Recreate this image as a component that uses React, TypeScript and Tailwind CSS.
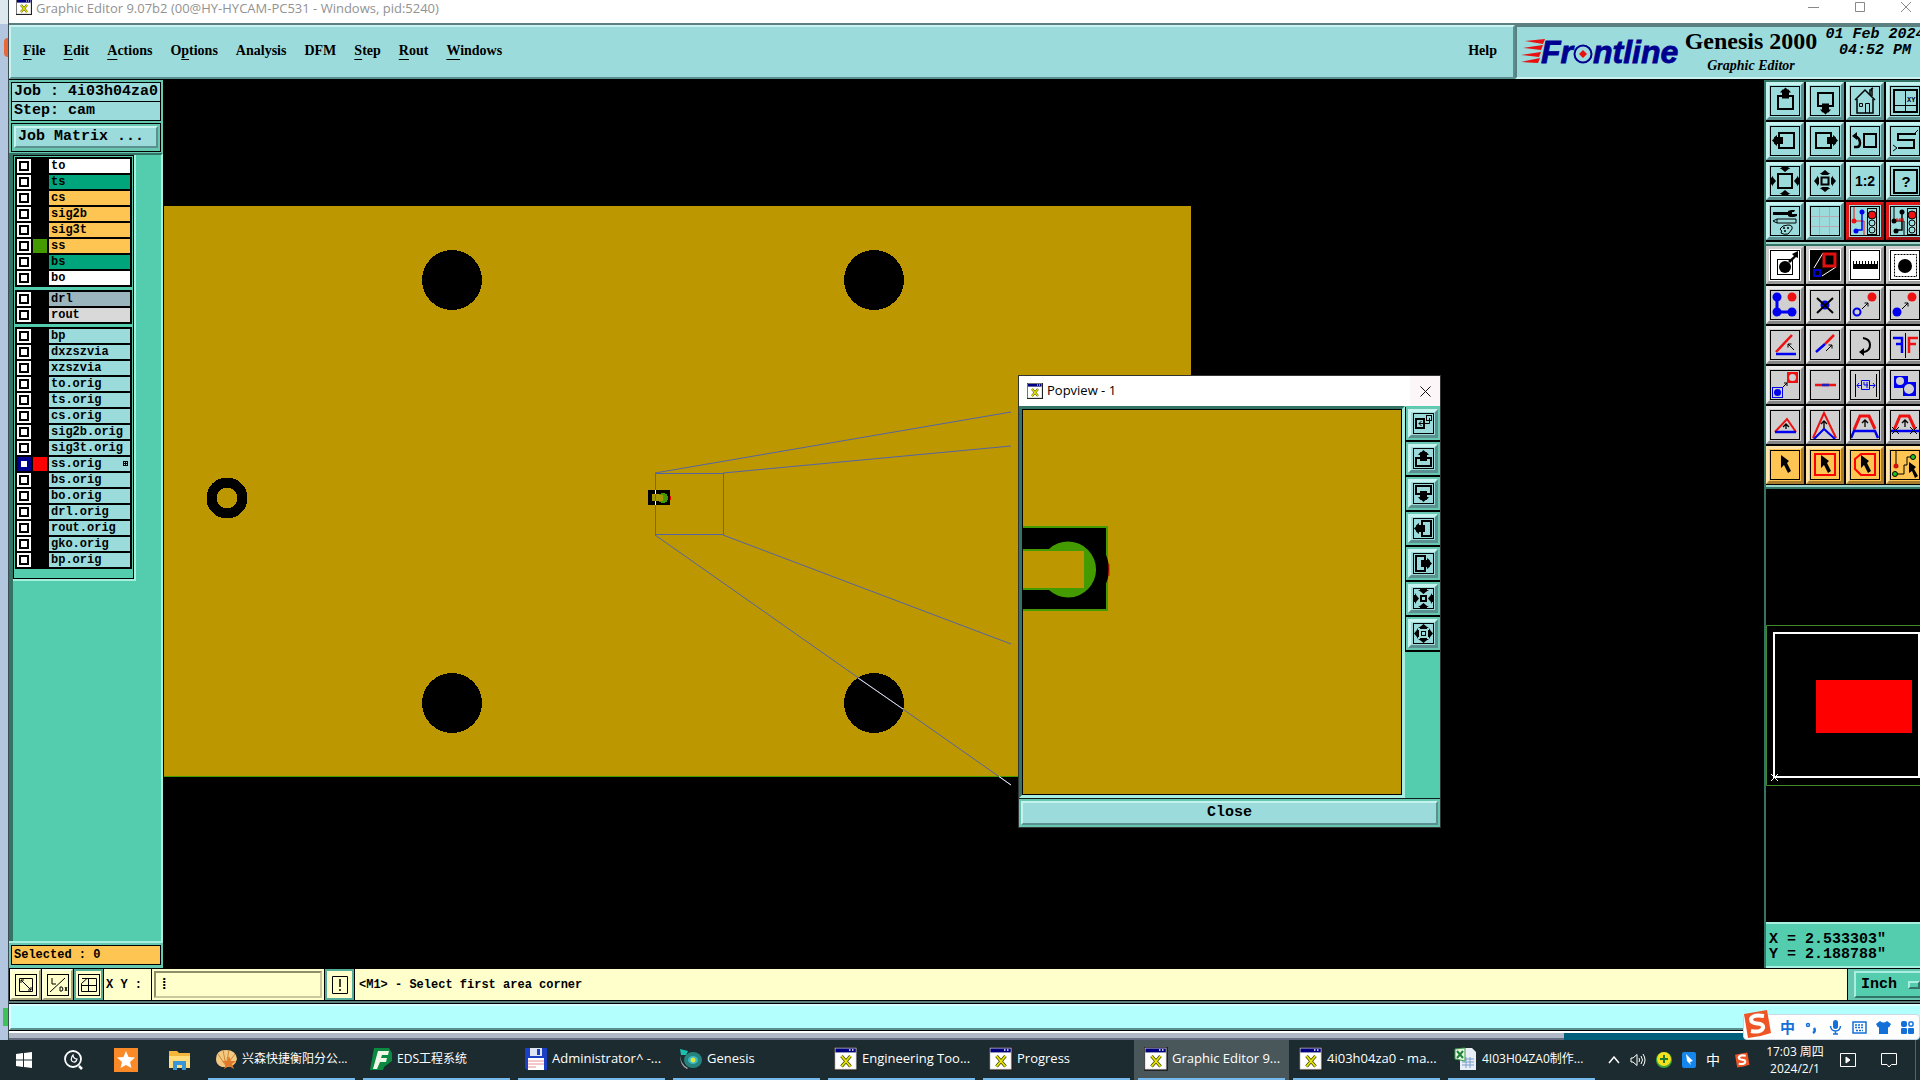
import React, { useState } from 'react';
import clsx from 'clsx';

type Layer = { name: string; color: string; swatch?: string; active?: boolean };

const MENU_ITEMS = [
  { label: 'File', key: 0 },
  { label: 'Edit', key: 0 },
  { label: 'Actions', key: 0 },
  { label: 'Options', key: 1 },
  { label: 'Analysis', key: -1 },
  { label: 'DFM', key: -1 },
  { label: 'Step', key: 0 },
  { label: 'Rout', key: 0 },
  { label: 'Windows', key: 0 },
];

const LAYER_GROUPS: Layer[][] = [
  [
    { name: 'to', color: 'bg-white' },
    { name: 'ts', color: 'bg-[#00a57c]' },
    { name: 'cs', color: 'bg-[#ffc553]' },
    { name: 'sig2b', color: 'bg-[#ffc553]' },
    { name: 'sig3t', color: 'bg-[#ffc553]' },
    { name: 'ss', color: 'bg-[#ffc553]', swatch: 'bg-[#449b00]' },
    { name: 'bs', color: 'bg-[#00a57c]' },
    { name: 'bo', color: 'bg-white' },
  ],
  [
    { name: 'drl', color: 'bg-[#9bb5bf]' },
    { name: 'rout', color: 'bg-[#d9d9d9]' },
  ],
  [
    { name: 'bp', color: 'bg-[#9bdbdb]' },
    { name: 'dxzszvia', color: 'bg-[#9bdbdb]' },
    { name: 'xzszvia', color: 'bg-[#9bdbdb]' },
    { name: 'to.orig', color: 'bg-[#9bdbdb]' },
    { name: 'ts.orig', color: 'bg-[#9bdbdb]' },
    { name: 'cs.orig', color: 'bg-[#9bdbdb]' },
    { name: 'sig2b.orig', color: 'bg-[#9bdbdb]' },
    { name: 'sig3t.orig', color: 'bg-[#9bdbdb]' },
    { name: 'ss.orig', color: 'bg-[#9bdbdb]', swatch: 'bg-[#ff0000]', active: true },
    { name: 'bs.orig', color: 'bg-[#9bdbdb]' },
    { name: 'bo.orig', color: 'bg-[#9bdbdb]' },
    { name: 'drl.orig', color: 'bg-[#9bdbdb]' },
    { name: 'rout.orig', color: 'bg-[#9bdbdb]' },
    { name: 'gko.orig', color: 'bg-[#9bdbdb]' },
    { name: 'bp.orig', color: 'bg-[#9bdbdb]' },
  ],
];

const MONO = "font-['Liberation_Mono','DejaVu_Sans_Mono',monospace] font-bold";
const SERIF = "font-['Liberation_Serif',serif] font-bold";
const UI = "font-['Open_Sans','Noto_Sans_CJK_SC',sans-serif]";

const CYAN_BEVEL = 'bg-[#9bdbdb] border-t-[#c4f3f0] border-l-[#c4f3f0] border-b-[#5c8f8f] border-r-[#5c8f8f]';
const GRAY_BEVEL = 'bg-[#d0d0d0] border-t-[#ececec] border-l-[#ececec] border-b-[#858585] border-r-[#858585]';
const WHITE_BEVEL = 'bg-white border-t-[#cfcfcf] border-l-[#cfcfcf] border-b-[#9a9a9a] border-r-[#9a9a9a]';
const ORANGE_BEVEL = 'bg-[#ffc553] border-t-[#ffe3a8] border-l-[#ffe3a8] border-b-[#a87c2c] border-r-[#a87c2c]';
const RED_BEVEL = 'bg-[#9bdbdb] border-t-[#e01818] border-l-[#e01818] border-b-[#9b1010] border-r-[#9b1010]';
const CREAM_BEVEL = 'bg-[#ffffcc] border-t-[#ffffe8] border-l-[#ffffe8] border-b-[#a3a37c] border-r-[#a3a37c]';

const BLUE = '#0000f0';
const RED = '#ee1111';

/* small arrow head with a stem, tip at 0,0 pointing up */
const Head = ({ x, y, r = 0 }: { x: number; y: number; r?: number }) => (
  <path d="M0 0l2 2h1l2.500 3h-2v6h-7v-6h-2l2.500-3h1z" transform={`translate(${x} ${y}) rotate(${r})`} />
);
const Tri = ({ x, y, r = 0 }: { x: number; y: number; r?: number }) => (
  <path d="M0 0l3 2.500l2.500 1.500h-2v1h-7v-1h-2l2.500-1.500z" transform={`translate(${x} ${y}) rotate(${r})`} />
);
const Box = ({ x, y, w, h = w, s = 2, c = '#000' }: { x: number; y: number; w: number; h?: number; s?: number; c?: string }) => (
  <rect x={x} y={y} width={w} height={h} fill="none" stroke={c} strokeWidth={s} />
);
const Go = ({ x, y, r = 0 }: { x: number; y: number; r?: number }) => (
  <path d="M0 0L6 -6M2.500 -6H6V-2.500" fill="none" stroke="#000" transform={`translate(${x} ${y}) rotate(${r})`} />
);
const Cursor = () => <path d="M11 5l8 6l-2 2l4 8l-3 2l-4-8l-3 3z" />;
const UpArrow = ({ x, y, h = 7 }: { x: number; y: number; h?: number }) => (
  <path d={`M${x} ${y + h}V${y}M${x - 3} ${y + 3}L${x} ${y}L${x + 3} ${y + 3}`} fill="none" stroke="#000" strokeWidth="1.300" />
);
const Signals = ({ lead }: { lead: string }) => (
  <>
    <path d="M4 1V16M4 15H14V29" fill="none" stroke={lead === 'red' ? RED : '#000'} />
    <path d="M12 5V24H7" fill="none" stroke={lead === 'red' ? BLUE : '#000'} strokeWidth="1.500" />
    {lead !== 'red' && <path d="M7 12V16M10 12V16M13 12V16M5 14H14" stroke={RED} />}
    <circle cx="4" cy="15" r="2.500" fill={lead === 'red' ? RED : '#000'} />
    <circle cx="12" cy="6" r="2.500" fill={lead === 'red' ? BLUE : '#000'} />
    <circle cx="6" cy="25" r="2.500" fill={lead === 'red' ? BLUE : '#000'} />
    <rect x="17.500" y="2.500" width="9" height="26" fill="#9bdbdb" stroke="#000" />
    <circle cx="22" cy="9" r="4" fill={RED} stroke="#000" />
    <circle cx="22" cy="17" r="3" fill="none" stroke="#000" />
    <circle cx="22" cy="24" r="3" fill="none" stroke="#000" />
  </>
);

const ICONS: Record<string, React.ReactNode> = {
  'Pan up': <><Box x={8} y={10} w={15} h={13} /><Head x={15.5} y={1.5} /></>,
  'Pan down': <><Box x={8} y={7} w={15} h={13} /><Head x={15.5} y={28.5} r={180} /></>,
  Home: (
    <>
      <path d="M5 14L15 4L25 14" fill="none" stroke="#000" strokeWidth="1.500" />
      <path d="M7 13V27H23V13M20 9V4H22V10M21 3L23 2" fill="none" stroke="#000" strokeWidth="1.500" />
      <path d="M9.500 17.500H12.500V20.500H9.500ZM15.500 27V17.500H19.500V27" fill="none" stroke="#000" />
    </>
  ),
  'Area XY': (
    <>
      <Box x={4} y={4} w={23} h={22} />
      <path d="M15.500 4V26M4 19.500H27" stroke="#000" />
      <text x="17" y="16" fontSize="7" fontWeight="bold" fontFamily="Liberation Mono">XY</text>
    </>
  ),
  'Pan left': <><Box x={9} y={7} w={15} /><Head x={2} y={14.5} r={-90} /></>,
  'Pan right': <><Box x={6} y={7} w={15} /><Head x={28} y={14.5} r={90} /></>,
  'Previous view': (
    <>
      <Box x={14} y={8} w={12} h={13} />
      <path d="M4 21H7Q10 21 10 17Q10 12 5 10" fill="none" stroke="#000" strokeWidth="2.500" />
      <path d="M2 10L7 6V14Z" />
    </>
  ),
  Serpentine: (
    <>
      <path d="M26 8H8V14H24V22H8" fill="none" stroke="#000" strokeWidth="2" />
      <path d="M25 7L28 4M7 22L3 19M7 22L3 25" stroke="#000" fill="none" />
    </>
  ),
  'Zoom in': (
    <>
      <Box x={8} y={8} w={14} />
      <Tri x={15} y={6} r={180} /><Tri x={15} y={24} /><Tri x={6} y={15} r={90} /><Tri x={24} y={15} r={-90} />
    </>
  ),
  'Zoom out': (
    <>
      <Box x={11.5} y={11.5} w={7} />
      <Tri x={15} y={4} /><Tri x={15} y={26} r={180} /><Tri x={4} y={15} r={-90} /><Tri x={26} y={15} r={90} />
    </>
  ),
  'Scale 1:2': <text x="15" y="20" textAnchor="middle" fontSize="14" fontWeight="bold" fontFamily="Liberation Sans">1:2</text>,
  Help: (
    <>
      <Box x={4} y={4} w={23} />
      <text x="16" y="21" textAnchor="middle" fontSize="15" fontWeight="bold" fontFamily="Liberation Sans">?</text>
    </>
  ),
  Options: (
    <>
      <path d="M3 6H18V9H3ZM18 5L21 4H25L24 6H22V8H27V10L24 11H20L18 10Z" />
      <path d="M3 15L7 13H26V17H7ZM7 13V17" fill="none" stroke="#000" />
      <path d="M10 23Q12 19 18 19Q23 19 22 23Q20 26 18 28Q14 29 11 27Q13 25 10 23Z" fill="none" stroke="#000" />
      <circle cx="15" cy="25" r="1" /><circle cx="18" cy="22" r="1" /><circle cx="14" cy="22" r="1" />
    </>
  ),
  Grid: <path d="M9.500 1V29M19.500 1V29M1 10.500H29M1 20.500H29" stroke="#b9a9b5" />,
  'Signals on': <Signals lead="red" />,
  'Signals off': <Signals lead="black" />,
  'Feature info': (
    <>
      <Box x={7.5} y={9.5} w={15} s={1} />
      <circle cx="15" cy="17" r="6" />
      <path d="M18 11L24 6L22 4L28 1V8L26 7L20 13Z" />
    </>
  ),
  Popview: (
    <>
      <rect width="30" height="30" />
      <path d="M4 18L13 3M12 26L26 17" stroke="#fff" fill="none" />
      <Box x={14} y={4} w={11} h={12} s={3} c="#e01010" /><Box x={4} y={20} w={6} c="#0000d0" />
    </>
  ),
  Measure: <path d="M3 19V11H4V14H6V11H7V14H9V11H10V14H12V11H13V14H15V11H16V14H18V11H19V14H21V11H22V14H24V11H25V14H27V11H28V19Z" />,
  Reference: (
    <>
      <rect x="4.500" y="4.500" width="22" height="22" fill="none" stroke="#000" strokeDasharray="2 1" />
      <circle cx="15" cy="16" r="7" />
    </>
  ),
  'Copy chain': (
    <>
      <path d="M7 7V22H22" fill="none" stroke={BLUE} strokeWidth="3" />
      <g fill={BLUE}><circle cx="7" cy="7" r="4.500" /><circle cx="7" cy="22" r="4.500" /><circle cx="22" cy="22" r="4.500" /></g>
      <circle cx="22" cy="7" r="4.500" fill={RED} />
    </>
  ),
  Delete: <><circle cx="15" cy="15" r="4.500" fill={BLUE} /><path d="M7 8L23 23M23 8L7 23" stroke="#000" strokeWidth="2" /></>,
  Move: <><circle cx="7" cy="22" r="3.500" fill="none" stroke={BLUE} strokeWidth="2" /><circle cx="22" cy="7" r="4.500" fill={RED} /><Go x={12} y={19} /></>,
  Copy: <><circle cx="7" cy="22" r="4.500" fill={BLUE} /><circle cx="22" cy="7" r="4.500" fill={RED} /><Go x={12} y={19} /></>,
  Rotate: (
    <>
      <path d="M6 22L22 5" stroke={RED} strokeWidth="2.500" /><path d="M6 24H26" stroke={BLUE} strokeWidth="2.500" />
      <Go x={24} y={20} r={-90} />
    </>
  ),
  Stretch: (
    <>
      <path d="M15 14L24 5" stroke={RED} strokeWidth="2.500" /><path d="M6 22L15 14" stroke={BLUE} strokeWidth="2.500" />
      <Go x={16} y={21} />
    </>
  ),
  Undo: <><path d="M13 8Q20 9 20 15Q20 21 14 22H11" fill="none" stroke="#000" strokeWidth="2" /><path d="M9 22L14 18V26Z" /></>,
  Mirror: (
    <>
      <path d="M3 8H12V23M12 14H6" fill="none" stroke={BLUE} strokeWidth="2.500" />
      <path d="M15.500 3V28" stroke="#000" />
      <path d="M28 8H19V23M19 14H26" fill="none" stroke={RED} strokeWidth="2.500" />
    </>
  ),
  Substitute: (
    <>
      <Box x={2.5} y={17.5} w={10} s={1} c={BLUE} /><circle cx="7.500" cy="22.500" r="3.500" fill={BLUE} />
      <rect x="17" y="2" width="11" height="11" fill={RED} /><circle cx="22.500" cy="7.500" r="3.500" fill="#d0d0d0" />
      <path d="M13 17L17 13M14 13H17V16" fill="none" stroke="#000" />
    </>
  ),
  Break: <><path d="M5 15H26" stroke={RED} strokeWidth="2.500" /><path d="M12 15H19" stroke="#2020c0" strokeWidth="2.500" /></>,
  Spacing: (
    <>
      <path d="M5.500 4V27M26.500 4V27" stroke="#000" />
      <g stroke={BLUE} fill="none"><path d="M11.500 10.500H19.500V19.500H11.500ZM14 12V15H18M17 12V18M7 15.500H11M20 15.500H25M9 13L7 15.500L9 18M23 13L25 15.500L23 18" /></g>
    </>
  ),
  Resize: (
    <>
      <path d="M4 6H18V12H26V26H13V18H4Z" fill={BLUE} />
      <circle cx="10" cy="11" r="4" fill="#d0d0d0" /><circle cx="19" cy="19" r="5" fill="#d0d0d0" />
    </>
  ),
  'Line slide': (
    <>
      <path d="M5 22L17 9L26 22" fill="none" stroke={RED} strokeWidth="2" /><path d="M5 22H26" stroke={BLUE} strokeWidth="2.500" />
      <UpArrow x={16} y={14} h={5} />
    </>
  ),
  'Corner slide': (
    <>
      <path d="M3 28L14 3L26 28" fill="none" stroke={RED} strokeWidth="2" /><path d="M4 29L14 19L25 29" fill="none" stroke={BLUE} strokeWidth="2" />
      <UpArrow x={14} y={11} />
    </>
  ),
  'Parallel slide': (
    <>
      <path d="M4 20L10 6H19L25 19" fill="none" stroke={RED} strokeWidth="3" /><path d="M1 28L4 21H25L28 28" fill="none" stroke={BLUE} strokeWidth="2.500" />
      <UpArrow x={15} y={10} />
    </>
  ),
  'Fixed slide': (
    <>
      <path d="M4 20L10 6H19L25 19" fill="none" stroke={RED} strokeWidth="3" /><path d="M1 21H29" stroke={BLUE} strokeWidth="2.500" />
      <path d="M2 17L9 24M9 17L2 24M20 17L27 24M27 17L20 24" stroke="#000" /><UpArrow x={15} y={10} />
    </>
  ),
  Select: <Cursor />,
  'Select frame': <><Box x={5} y={4} w={20} h={21} c="#ff0000" /><Cursor /></>,
  'Select polygon': <><path d="M11 4H25V25H11L5 19V9Z" fill="none" stroke="#ff0000" strokeWidth="2" /><Cursor /></>,
  'Select net': (
    <>
      <path d="M6 1V16M6 24H14V15H17V7H24" fill="none" stroke="#000" />
      <circle cx="6" cy="16" r="2.500" fill="#d01010" /><circle cx="5" cy="24" r="2.500" fill="#20c020" stroke="#000" /><circle cx="23" cy="7" r="2.500" fill="#20c020" stroke="#000" />
      <path d="M19 12l7 5l-2 2l4 7l-3 2l-3-7l-3 2z" />
    </>
  ),
};

/* the popview buttons use their own 21px drawings */
const SMALL_ICONS: Record<string, React.ReactNode> = {
  'Place popview': (
    <>
      <Box x={3} y={6} w={8} h={9} />
      <Box x={13.5} y={2.5} w={5} s={1} />
      <path d="M16.500 5V10.500H6M8.500 8L6 10.500L8.500 13" fill="none" stroke="#000" />
    </>
  ),
  'Popview up': <><Box x={3} y={10} w={15} h={8} /><Head x={10.5} y={2} /></>,
  'Popview down': <><Box x={3} y={3} w={15} h={8} /><Head x={10.5} y={19} r={180} /></>,
  'Popview left': <><Box x={9} y={3} w={9} h={15} /><Head x={1} y={10.5} r={-90} /></>,
  'Popview right': <><Box x={3} y={3} w={9} h={15} /><Head x={19} y={10.5} r={90} /></>,
  'Popview zoom in': (
    <>
      <Box x={8} y={8} w={5} />
      <Tri x={10.5} y={6} r={180} /><Tri x={10.5} y={15} /><Tri x={6} y={10.5} r={90} /><Tri x={15} y={10.5} r={-90} />
    </>
  ),
  'Popview zoom out': (
    <>
      <Box x={8.5} y={8.5} w={4} s={1} />
      <Tri x={10.5} y={1} /><Tri x={10.5} y={20} r={180} /><Tri x={1} y={10.5} r={-90} /><Tri x={20} y={10.5} r={90} />
    </>
  ),
};

const VIEW_TOOLS = [
  'Pan up', 'Pan down', 'Home', 'Area XY',
  'Pan left', 'Pan right', 'Previous view', 'Serpentine',
  'Zoom in', 'Zoom out', 'Scale 1:2', 'Help',
  'Options', 'Grid', 'Signals on', 'Signals off',
];

const EDIT_TOOLS = [
  'Feature info', 'Popview', 'Measure', 'Reference',
  'Copy chain', 'Delete', 'Move', 'Copy',
  'Rotate', 'Stretch', 'Undo', 'Mirror',
  'Substitute', 'Break', 'Spacing', 'Resize',
  'Line slide', 'Corner slide', 'Parallel slide', 'Fixed slide',
  'Select', 'Select frame', 'Select polygon', 'Select net',
];

const XIcon = ({ className }: { className?: string }) => (
  <svg viewBox="0 0 16 16" className={className} aria-hidden="true">
    <rect width="16" height="16" fill="#222" />
    <rect x="0.500" y="0.500" width="14.500" height="14.500" fill="#c8c8c8" />
    <rect x="1" y="1" width="13.500" height="2.500" fill="#000080" />
    <path d="M10 2h1M12 2h1" stroke="#fff" />
    <rect x="1" y="4" width="13.500" height="10.500" fill="#fff" />
    <path d="M5 6L11 13M11 6L5 13" stroke="#444400" strokeWidth="2.200" />
    <path d="M5 6L11 13M11 6L5 13" stroke="#e8e800" strokeWidth="1.200" />
  </svg>
);

const ToolButton = ({ name, bevel }: { name: string; bevel: string }) => (
  <button aria-label={name} className={clsx('size-[38px] border-3 p-px', bevel)}>
    <svg viewBox="0 0 30 30" className="size-[30px]">
      {ICONS[name]}
      {name !== 'Popview' && <Box x={0.5} y={0.5} w={29} s={1} />}
    </svg>
  </button>
);

const editBevel = (i: number) => {
  if (i < 4) return WHITE_BEVEL;
  return i >= 20 ? ORANGE_BEVEL : GRAY_BEVEL;
};

const TitleBar = () => (
  <header className="flex h-[23px] items-start bg-white pl-[7px]">
    <XIcon className="-mt-px size-4" />
    <h1 className={`${UI} flex-1 pl-1 text-[13px] leading-4 text-[#929292]`}>
      Graphic Editor 9.07b2 (00@HY-HYCAM-PC531 - Windows, pid:5240)
    </h1>
    <div className="flex gap-8 pr-1.5">
      {['M0 7.500H11', 'M1.500 2.500H10.500V11.500H1.500Z', 'M1 2L11 12M11 2L1 12'].map((d, i) => (
        <button key={d} aria-label={['Minimize', 'Maximize', 'Close'][i]} className="w-3.5">
          <svg viewBox="0 0 12 13" className="h-[13px] w-3" fill="none" stroke="#888"><path d={d} /></svg>
        </button>
      ))}
    </div>
  </header>
);

const Logo = () => (
  <svg viewBox="0 -5 162 40" className="h-10 w-[162px] shrink-0" role="img" aria-label="Frontline">
    <g fill="#e81010">
      <path d="M4 4L24 2L22 7Z" /><path d="M2 11L22 8L20 13Z" /><path d="M0 18L20 15L18 20Z" /><path d="M0 25L19 21L17 26Z" />
    </g>
    <g fill="#000090" stroke="#000090" strokeWidth="0.800" fontFamily="Liberation Sans" fontWeight="bold" fontStyle="italic" fontSize="32">
      <text x="20" y="26">Fr</text>
      <text x="72" y="26">ntline</text>
    </g>
    <circle cx="62" cy="17" r="8.500" fill="#9bdbdb" stroke="#000090" strokeWidth="2" />
    <path d="M62 13L66 17L62 21L58 17Z" fill="#e81010" />
  </svg>
);

const MenuBar = () => (
  <div className="flex h-14 border-t-2 border-[#5c8080] bg-[#9bdbdb]">
    <nav className={`${SERIF} flex min-w-0 flex-1 items-center gap-[18px] border-2 border-[#c9f3f1] border-r-[#5c8f8f] border-b-[#5c8f8f] pr-4 pb-0.5 pl-3 text-sm`}>
      {MENU_ITEMS.map(({ label, key }) => (
        <button key={label}>
          {key < 0 ? label : (
            <>{label.slice(0, key)}<span className="underline underline-offset-4">{label[key]}</span>{label.slice(key + 1)}</>
          )}
        </button>
      ))}
      <button className="ml-auto">Help</button>
    </nav>
    <div className="flex w-[405px] shrink-0 items-center overflow-hidden border-2 border-r-0 border-[#5c8080] border-b-[#c9f3f1] pl-1">
      <Logo />
      <div className={`${SERIF} w-[136px] shrink-0 text-center`}>
        <div className="text-2xl leading-7 whitespace-nowrap">Genesis 2000</div>
        <div className="text-sm leading-[22px] italic">Graphic Editor</div>
      </div>
      <div className={`${MONO} w-[108px] shrink-0 self-start pl-1 text-center text-[15px] leading-4 whitespace-nowrap italic`}>
        <div>01 Feb 2024</div>
        <div>04:52 PM</div>
      </div>
    </div>
  </div>
);

const LayerList = () => (
  <div className="flex flex-1 border-t-2 border-r-2 border-b-2 border-t-[#347466] border-r-[#a9efe0] border-b-[#a9efe0] bg-[#54cdae]">
    <div className="w-1 bg-[#347466]" />
    <div className="self-start border-r-2 border-b-2 border-[#a9efe0]">
      <div className="flex h-[424px] w-[121px] flex-col gap-[3px] border border-black p-px">
        {LAYER_GROUPS.map((group, g) => (
          <ul key={g} className="flex w-[117px] flex-col gap-0.5 bg-black p-0.5">
            {group.map((layer) => (
              <li key={layer.name}>
                <label className="flex h-3.5 gap-0.5">
                  <input
                    type="checkbox"
                    defaultChecked={layer.active}
                    className="size-3.5 appearance-none border-2 border-white bg-white shadow-[inset_0_0_0_2px_#000] checked:border-[#000090] checked:shadow-[inset_0_0_0_2px_#000090]"
                  />
                  <span className={clsx('size-3.5', layer.swatch)} />
                  <span className={clsx(MONO, 'flex flex-1 items-center justify-between px-0.5 text-xs leading-3', layer.color)}>
                    {layer.name}
                    {layer.active && (
                      <svg viewBox="0 0 5 5" className="size-[5px]"><path d="M0 0H5V5H0ZM1 1V2H2V1ZM3 1V2H4V1ZM1 3V4H2V3ZM3 3V4H4V3Z" fillRule="evenodd" /></svg>
                    )}
                  </span>
                </label>
              </li>
            ))}
          </ul>
        ))}
      </div>
    </div>
  </div>
);

const Sidebar = () => (
  <aside className="flex w-[154px] shrink-0 flex-col bg-[#66c8b0]">
    <div className={`${MONO} px-0.5 pt-0.5 text-[15px] whitespace-nowrap`}>
      <div className="h-5 border border-black bg-[#9bdbdb] pl-0.5 leading-[18px]">Job : 4i03h04za0</div>
      <div className="h-[19px] border border-t-0 border-black bg-[#9bdbdb] pl-0.5 leading-[18px]">Step: cam</div>
      <div className="mt-0.5 border border-black p-0.5">
        <button className={clsx('h-[22px] w-full border-2 pl-0.5 text-left leading-4', CYAN_BEVEL)}>Job Matrix ...</button>
      </div>
    </div>
    <div className="mt-px flex flex-1"><LayerList /></div>
    <div className="px-0.5 pt-0.5 pb-[3px]">
      <div className={`${MONO} h-5 border border-black bg-[#ffc553] px-0.5 text-xs leading-[18px]`}>Selected : 0</div>
    </div>
  </aside>
);

/* board drawing, one unit per screen pixel */
const Board = () => (
  <svg className="block h-[888px] w-[1601px]" viewBox="0 0 1601 888" shapeRendering="crispEdges">
    <rect x="1" y="126" width="1027" height="570" fill="#bd9700" />
    <path d="M1 696.500H1028" stroke="#449b00" />
    {[[289, 200], [711, 200], [289, 623], [711, 623]].map(([cx, cy]) => (
      <circle key={`${cx}-${cy}`} cx={cx} cy={cy} r="30" />
    ))}
    <circle cx="64" cy="418" r="15.500" fill="none" stroke="#000" strokeWidth="10" />
    <rect x="485" y="410" width="22" height="15" />
    <rect x="489" y="414" width="10" height="7" fill="#bd9700" />
    <circle cx="500" cy="418" r="5" fill="#449b00" />
    <rect x="489" y="415" width="11" height="6" fill="#a49700" />
    <path d="M507 416V420" stroke="#f00" />
    <g fill="none" stroke="#5564a4">
      <rect x="492.500" y="393.500" width="68" height="61" />
      <path d="M492 393L848 332M560 393L848 366M492 455L848 705M560 455L848 564" shapeRendering="auto" />
    </g>
    <path d="M492.500 410V414M492.500 421V425" stroke="#fff" />
    <path d="M695 598L740 629" stroke="#ddd" shapeRendering="auto" />
    <path d="M836 696.500L848 705" stroke="#eee" shapeRendering="auto" />
  </svg>
);

const PopviewWindow = ({ onClose }: { onClose: () => void }) => (
  <section className="absolute top-[295px] left-[855px] w-[423px] border border-[#333] bg-[#101c18]">
    <div className="flex h-[30px] items-center bg-white pl-2">
      <XIcon className="size-4" />
      <h2 className={`${UI} flex-1 pb-px pl-1 text-[13px]`}>Popview - 1</h2>
      <button aria-label="Close popview" onClick={onClose} className="flex h-full w-[30px] items-center justify-center bg-[#fdf6f8]">
        <svg viewBox="0 0 11 11" className="size-[11px]" stroke="#111"><path d="M0.500 0.500L10.500 10.500M10.500 0.500L0.500 10.500" /></svg>
      </button>
    </div>
    <div className="flex">
      <div className="flex-1 border-3 border-t-[#347466] border-r-[#a9efe0] border-b-[#a9efe0] border-l-[#347466]">
        <svg viewBox="0 0 378 384" className="h-[386px] w-full border border-black bg-[#bd9700]" preserveAspectRatio="xMinYMin slice">
          <rect x="-2" y="117" width="86" height="83" stroke="#449b00" strokeWidth="2" />
          <path d="M81 141Q91 159 81 178Z" />
          <path d="M86 154V166" stroke="#f00" />
          <path d="M0 139H26A28 28 0 1 1 26 180H0Z" fill="#449b00" />
          <rect y="141" width="61" height="37" fill="#bd9700" />
        </svg>
      </div>
      <div className="flex w-[35px] flex-col bg-[#54cdae] pt-px">
        {Object.keys(SMALL_ICONS).map((name) => (
          <div key={name} className="h-[35px] border-b-2 border-l border-black bg-[#66c8b0] p-0.5">
            <button aria-label={name} className={clsx('flex h-[29px] w-[30px] items-center justify-center border-3', CYAN_BEVEL)}>
              <svg viewBox="0 0 21 21" className="size-[21px]">{SMALL_ICONS[name]}<Box x={0.5} y={0.5} w={20} s={1} /></svg>
            </button>
          </div>
        ))}
      </div>
    </div>
    <div className="mt-px bg-[#66c8b0] p-0.5">
      <button onClick={onClose} className={clsx(MONO, 'block h-6 w-full border-2 text-[15px] leading-5', CYAN_BEVEL)}>Close</button>
    </div>
  </section>
);

const ToolPanel = () => (
  <aside className="flex w-[156px] shrink-0 flex-col overflow-hidden border-t-2 border-l-2 border-[#347466] bg-black">
    <div className="grid w-[158px] grid-cols-4 gap-0.5 pb-0.5">
      {VIEW_TOOLS.map((name) => (
        <ToolButton key={name} name={name} bevel={name.startsWith('Signals') ? RED_BEVEL : CYAN_BEVEL} />
      ))}
    </div>
    <div className="h-1 border-y-2 border-t-[#9fd6cc] border-b-[#347466]" />
    <div className="grid w-[158px] grid-cols-4 gap-0.5 pb-px">
      {EDIT_TOOLS.map((name, i) => <ToolButton key={name} name={name} bevel={editBevel(i)} />)}
    </div>
    <div className="h-1 border-y-2 border-t-[#9fd6cc] border-b-[#347466]" />
    <div className="flex flex-1 flex-col pt-[136px]">
      <svg viewBox="0 0 154 161" className="h-[161px] w-[154px]">
        <path d="M154 0.500H0.500V160.500H154" fill="none" stroke="#3e8a2a" />
        <rect x="8" y="8" width="145" height="144" fill="none" stroke="#fff" strokeWidth="2" />
        <rect x="50" y="55" width="96" height="53" fill="#f00" />
        <path d="M5 149L12 156M12 149L5 156" stroke="#fff" />
      </svg>
    </div>
    <div className={`${MONO} h-[46px] border-y-2 border-t-[#a9efe0] border-b-[#a9efe0] bg-[#54cdae] px-[3px] pt-2 text-[15px] leading-[15px]`}>
      <div>X = 2.533303"</div>
      <div>Y = 2.188788"</div>
    </div>
  </aside>
);

const PromptBar = () => (
  <div className={`${MONO} flex h-[33px] gap-px bg-black py-px pl-px text-xs`}>
    {[
      { label: 'Snap to line', d: 'M3.500 3.500H16.500V16.500H3.500ZM5 5L15 15M5 8V5H8M15 12V15H12' },
      { label: 'Snap off', d: 'M2 17L17 3M4 3V9H8M12 12V16M12 12H14L15 14L14 16H12M17 12L19 16M19 12L17 16' },
      { label: 'Snap to grid', d: 'M3 3.500H17.500V16.500H2.500V8.500L8 3.500M9.500 3V17M2.500 10.500H17.500' },
    ].map(({ label, d }, i) => (
      <button key={label} aria-label={label} className={clsx('flex items-center justify-center border-2', i === 2 ? 'w-[29px] border-[#54ad98] bg-[#ffffcc]' : 'w-[31px]', i < 2 && CREAM_BEVEL)}>
        <svg viewBox="0 0 20 20" className="size-[22px] border border-black" fill="none" stroke="#000"><path d={d} /></svg>
      </button>
    ))}
    <label htmlFor="coords" className="flex w-[47px] items-center bg-[#ffffcc] pl-0.5 whitespace-nowrap">X Y :</label>
    <div className="w-[172px] bg-[#ffffcc] p-0.5">
      <input id="coords" className="h-[27px] w-full border-2 border-t-[#8f8f6c] border-r-[#c8c89c] border-b-[#c8c89c] border-l-[#8f8f6c] bg-[#ffffcc] px-1 text-sm outline-none placeholder:text-black" placeholder="⁞" />
    </div>
    <button aria-label="Alert" className="flex w-[29px] items-center justify-center border-2 border-[#54ad98] bg-[#ffffcc]">
      <svg viewBox="0 0 18 20" className="h-5 w-[18px]" fill="none" stroke="#000"><path d="M1.500 1.500H16.500V18.500H1.500Z" /><path d="M9 4V12M9 14V16" strokeWidth="1.500" /></svg>
    </button>
    <div className="flex min-w-0 flex-1 items-center bg-[#ffffcc] pl-1 whitespace-nowrap">&lt;M1&gt; - Select first area corner</div>
    <div className="flex w-[72px] bg-[#66c8b0] py-0.5 pl-1.5">
      <button className="flex w-full items-center justify-between border-2 border-r-0 border-t-[#a9efe0] border-b-[#347466] border-l-[#a9efe0] bg-[#54cdae] pl-[5px] text-[15px]">
        Inch
        <span className="h-2 w-3 border-2 border-t-[#a9efe0] border-r-[#347466] border-b-[#347466] border-l-[#a9efe0]" />
      </button>
    </div>
  </div>
);

const ShellIcon = () => (
  <svg viewBox="0 0 24 24" className="size-6">
    <path d="M2 12Q2 3 12 3Q22 3 23 12Q21 20 13 20H8Q2 18 2 12Z" fill="#f3c981" />
    <path d="M12 19L4 7M12 19L9 3M12 19L15 3M12 19L21 7" stroke="#c98a3a" />
    <path d="M15 9L17 14L22 14L18 17L20 22L15 19L10 22L12 17L8 14L13 14Z" fill="#e2792a" />
  </svg>
);
const EdsIcon = () => (
  <svg viewBox="0 0 24 24" className="size-6">
    <path d="M5 1H20L23 6V14L15 20L14 23H1Z" fill="#0c8a42" />
    <path d="M9 4H20L19 8H13L12 11H18L17 15H11L8 22H4Z" fill="#f2f8e8" />
  </svg>
);
const FloppyIcon = () => (
  <svg viewBox="0 0 24 24" className="size-6">
    <path d="M1 1H23V23H3L1 21Z" fill="#1d3fc4" />
    <rect x="6" y="1" width="12" height="8" fill="#dde4f4" /><rect x="13" y="2" width="3" height="6" fill="#1d3fc4" />
    <rect x="4" y="11" width="16" height="12" fill="#fff" /><path d="M4 14H20M4 17H20M4 20H12" stroke="#e89090" />
  </svg>
);
const EyeIcon = () => (
  <svg viewBox="0 0 24 24" className="size-6">
    <path d="M1 8Q2 18 9 21L8 22Q1 19 1 8Z" fill="#aaa" />
    <ellipse cx="14" cy="13" rx="9" ry="8" fill="#26847e" /><ellipse cx="14" cy="13" rx="5" ry="4" fill="#3cb8c8" />
    <circle cx="14" cy="13" r="2.500" fill="#d8e83a" /><path d="M1 2L9 4L7 8H2Z" fill="#1dc0b0" />
  </svg>
);
const SheetIcon = () => (
  <svg viewBox="0 0 24 24" className="size-6">
    <path d="M6 1H18L22 5V23H6Z" fill="#e8eef6" />
    <path d="M8 12H20M8 15H20M8 18H20M12 10V21M16 10V21" stroke="#7aa0cc" />
    <path d="M1 2L11 1V14L1 12Z" fill="#e8f4e4" stroke="#3c9a4a" /><path d="M3 4L9 11M9 4L3 11" stroke="#1c8434" strokeWidth="2" />
  </svg>
);
const SogouIcon = ({ className }: { className?: string }) => (
  <svg viewBox="0 0 30 30" className={className}>
    <path d="M2 5Q14 3 25 1L29 24Q18 28 6 29Z" fill="#ee5424" />
    <path d="M22 7Q11 5 9 10Q9 14 15 14.500Q22 15 21 19Q19 24 9 22" fill="none" stroke="#fff" strokeWidth="4" />
  </svg>
);

const TASKS = [
  { label: '兴森快捷衡阳分公...', icon: <ShellIcon />, cjk: true },
  { label: 'EDS工程系统', icon: <EdsIcon />, cjk: true },
  { label: 'Administrator^ -...', icon: <FloppyIcon /> },
  { label: 'Genesis', icon: <EyeIcon /> },
  { label: 'Engineering Too...', icon: <XIcon className="size-6" /> },
  { label: 'Progress', icon: <XIcon className="size-6" /> },
  { label: 'Graphic Editor 9...', icon: <XIcon className="size-6" />, active: true },
  { label: '4i03h04za0 - ma...', icon: <XIcon className="size-6" /> },
  { label: '4I03H04ZA0制作...', icon: <SheetIcon />, cjk: true },
];

const Taskbar = () => (
  <footer className={`${UI} flex h-10 shrink-0 items-stretch bg-[#1c2b2f] text-white`}>
    <div className="flex w-[204px] shrink-0 items-center gap-[30px] pl-3">
      <button aria-label="Start" className="pl-1">
        <svg viewBox="0 0 16 16" className="size-4" fill="#fff"><path d="M0 2L7 1V7.500H0ZM8 1L16 0V7.500H8ZM0 8.500H7V15L0 14ZM8 8.500H16V16L8 15Z" /></svg>
      </button>
      <button aria-label="Search">
        <svg viewBox="0 0 22 22" className="size-[22px]" fill="none" stroke="#fff" strokeWidth="1.800"><circle cx="11" cy="10" r="8" /><path d="M11 6Q11.500 10 15 10Q14 13.500 11.500 13Q8.500 12 9.500 9Q10 7 11 6Z" strokeWidth="1.200" /><path d="M17 17L20 20" strokeWidth="2.500" /></svg>
      </button>
      <button aria-label="Favorites" className="flex size-6 items-center justify-center bg-[#fa8a28]">
        <svg viewBox="0 0 18 18" className="size-[18px]" fill="#fff"><path d="M9 0L11.500 6L18 6.500L13 11L14.500 17L9 14L3.500 17L5 11L0 6.500L6.500 6Z" /></svg>
      </button>
      <button aria-label="File Explorer">
        <svg viewBox="0 0 23 20" className="h-5 w-[23px]"><path d="M1 1H9L11 3H22V18H1Z" fill="#f4b73c" /><path d="M1 6H22V18H1Z" fill="#ffdc7c" /><path d="M5 11H18V20H14V15H9V20H5Z" fill="#3a94d8" /></svg>
      </button>
    </div>
    <div className="flex min-w-0 flex-1">
      {TASKS.map(({ label, icon, active, cjk }) => (
        <button key={label} className={clsx('flex w-[155px] px-1', active && 'bg-[#49575b]')}>
          <span className={clsx('flex h-10 w-[147px] items-center gap-1 border-b-2 border-[#76b9ed] pl-1.5 whitespace-nowrap', cjk ? 'text-xs' : 'text-[13px]')}>
            <span className="shrink-0">{icon}</span>
            {label}
          </span>
        </button>
      ))}
    </div>
    <div className="flex shrink-0 items-center gap-2.5 pr-1 text-[13px]">
      <svg viewBox="0 0 12 8" className="h-2 w-3" fill="none" stroke="#fff" strokeWidth="1.500"><path d="M1 7L6 1L11 7" /></svg>
      <svg viewBox="0 0 16 14" className="h-3.5 w-4" fill="none" stroke="#fff"><path d="M1 5H3L7 1.500V12.500L3 9H1ZM9 5Q10 7 9 9M11 3Q14 7 11 11M13 1Q17 7 13 13" /></svg>
      <svg viewBox="0 0 16 16" className="size-4"><circle cx="8" cy="8" r="8" fill="#3aa53a" /><circle cx="8" cy="7" r="7" fill="#f4e01c" /><path d="M8 3V11M4 7H12" stroke="#1c7a2c" strokeWidth="2" /></svg>
      <svg viewBox="0 0 14 16" className="h-4 w-3.5"><rect width="14" height="16" rx="2" fill="#1586ee" /><path d="M4 2L11 9L8 10L9 13L5 9Z" fill="#fff" /></svg>
      <span className="text-sm">中</span>
      <span className="pl-1"><SogouIcon className="size-4" /></span>
      <div className="w-[70px] text-center text-xs leading-[17px]">
        <div>17:03 周四</div>
        <div>2024/2/1</div>
      </div>
      <button aria-label="Media" className="w-[31px]">
        <svg viewBox="0 0 16 14" className="h-3.5 w-4" fill="none" stroke="#fff"><path d="M0.500 0.500H15.500V13.500H0.500Z" /><path d="M6 4L10 7L6 10Z" fill="#fff" /></svg>
      </button>
      <button aria-label="Notifications" className="w-6">
        <svg viewBox="0 0 16 16" className="size-4" fill="none" stroke="#fff"><path d="M0.500 1.500H15.500V12.500H10.500L8 15L6 12.500H0.500Z" /></svg>
      </button>
      <div className="h-full w-px bg-[#56646a]" />
    </div>
  </footer>
);

const ImeBar = () => (
  <div className="absolute right-0 bottom-0 flex h-[26px] items-center gap-[9px] rounded border border-[#cdd8e4] bg-white pr-1 pl-9 text-[#1370d8]">
    <SogouIcon className="absolute bottom-0 -left-0.5 size-[30px]" />
    <span className={`${UI} text-[15px] leading-4 font-bold`}>中</span>
    <svg viewBox="0 0 15 15" className="size-[15px]" fill="none" stroke="currentColor" strokeWidth="1.500"><circle cx="4" cy="5" r="1.500" /><path d="M10 8Q12 11 9 13" strokeWidth="2.500" /></svg>
    <svg viewBox="0 0 15 15" className="size-[15px]" fill="none" stroke="currentColor" strokeWidth="1.500"><rect x="5" y="0" width="5" height="9" rx="2.500" fill="currentColor" stroke="none" /><path d="M2.500 6Q3 11 7.500 11Q12 11 12.500 6M7.500 11V14M5 14H10" /></svg>
    <svg viewBox="0 0 15 15" className="size-[15px]" fill="none" stroke="currentColor" strokeWidth="1.500"><rect x="1" y="2" width="13" height="11" /><path d="M3 5H12M3 7.500H12M4 10.500H11" strokeDasharray="2 1" /></svg>
    <svg viewBox="0 0 15 15" className="size-[15px]" fill="currentColor"><path d="M4 1Q7.500 4 11 1L15 4L13 7.500L12 7V14H3V7L2 7.500L0 4Z" /></svg>
    <svg viewBox="0 0 15 15" className="size-[15px]" fill="currentColor"><rect x="1" y="1" width="6" height="6" rx="2" /><rect x="9" y="2" width="4" height="4" rx="1" fill="none" stroke="currentColor" strokeWidth="1.500" /><rect x="1" y="8" width="6" height="6" rx="1" /><rect x="8" y="8" width="6" height="6" rx="1" /></svg>
  </div>
);

const App = () => {
  const [popviewOpen, setPopviewOpen] = useState(true);

  return (
    <div className="flex min-h-screen flex-col overflow-hidden bg-[#1c2b2f] text-black">
      <div className="relative flex flex-1">
        {/* edge of the window behind */}
        <div className="flex w-2 shrink-0 flex-col items-end bg-[#b3c6e0]">
          <div className="h-6 w-full bg-[#dce8ee]" />
          <div className="mt-3.5 h-[19px] w-1 rounded-l-sm bg-[#e8683a]" />
          <div className="mt-auto mb-3.5 h-[18px] w-[5px] bg-[#3cc45a]" />
        </div>

        <div className="flex min-w-0 flex-1 flex-col border-l border-[#3c4c50]">
          <TitleBar />
          <MenuBar />
          <div className="flex flex-1 bg-black pt-px">
            <Sidebar />
            <main className="relative min-w-0 flex-1 overflow-hidden">
              <Board />
              {popviewOpen && <PopviewWindow onClose={() => setPopviewOpen(false)} />}
            </main>
            <ToolPanel />
          </div>
          <PromptBar />
          <div className="border-t-2 border-b-2 border-t-[#5c8080] border-b-white bg-black py-px">
            <div className="h-[26px] border-2 border-t-[#d8ffff] border-r-0 border-b-[#5c9090] border-l-[#d8ffff] bg-[#b3fffd]" />
          </div>
          <div className="flex h-[7px] bg-[#00607c]">
            <div className="w-[1555px] border-b-2 border-[#666c80] bg-[#b0b8c8]" />
          </div>
        </div>

        <ImeBar />
      </div>
      <Taskbar />
    </div>
  );
};

export default App;
